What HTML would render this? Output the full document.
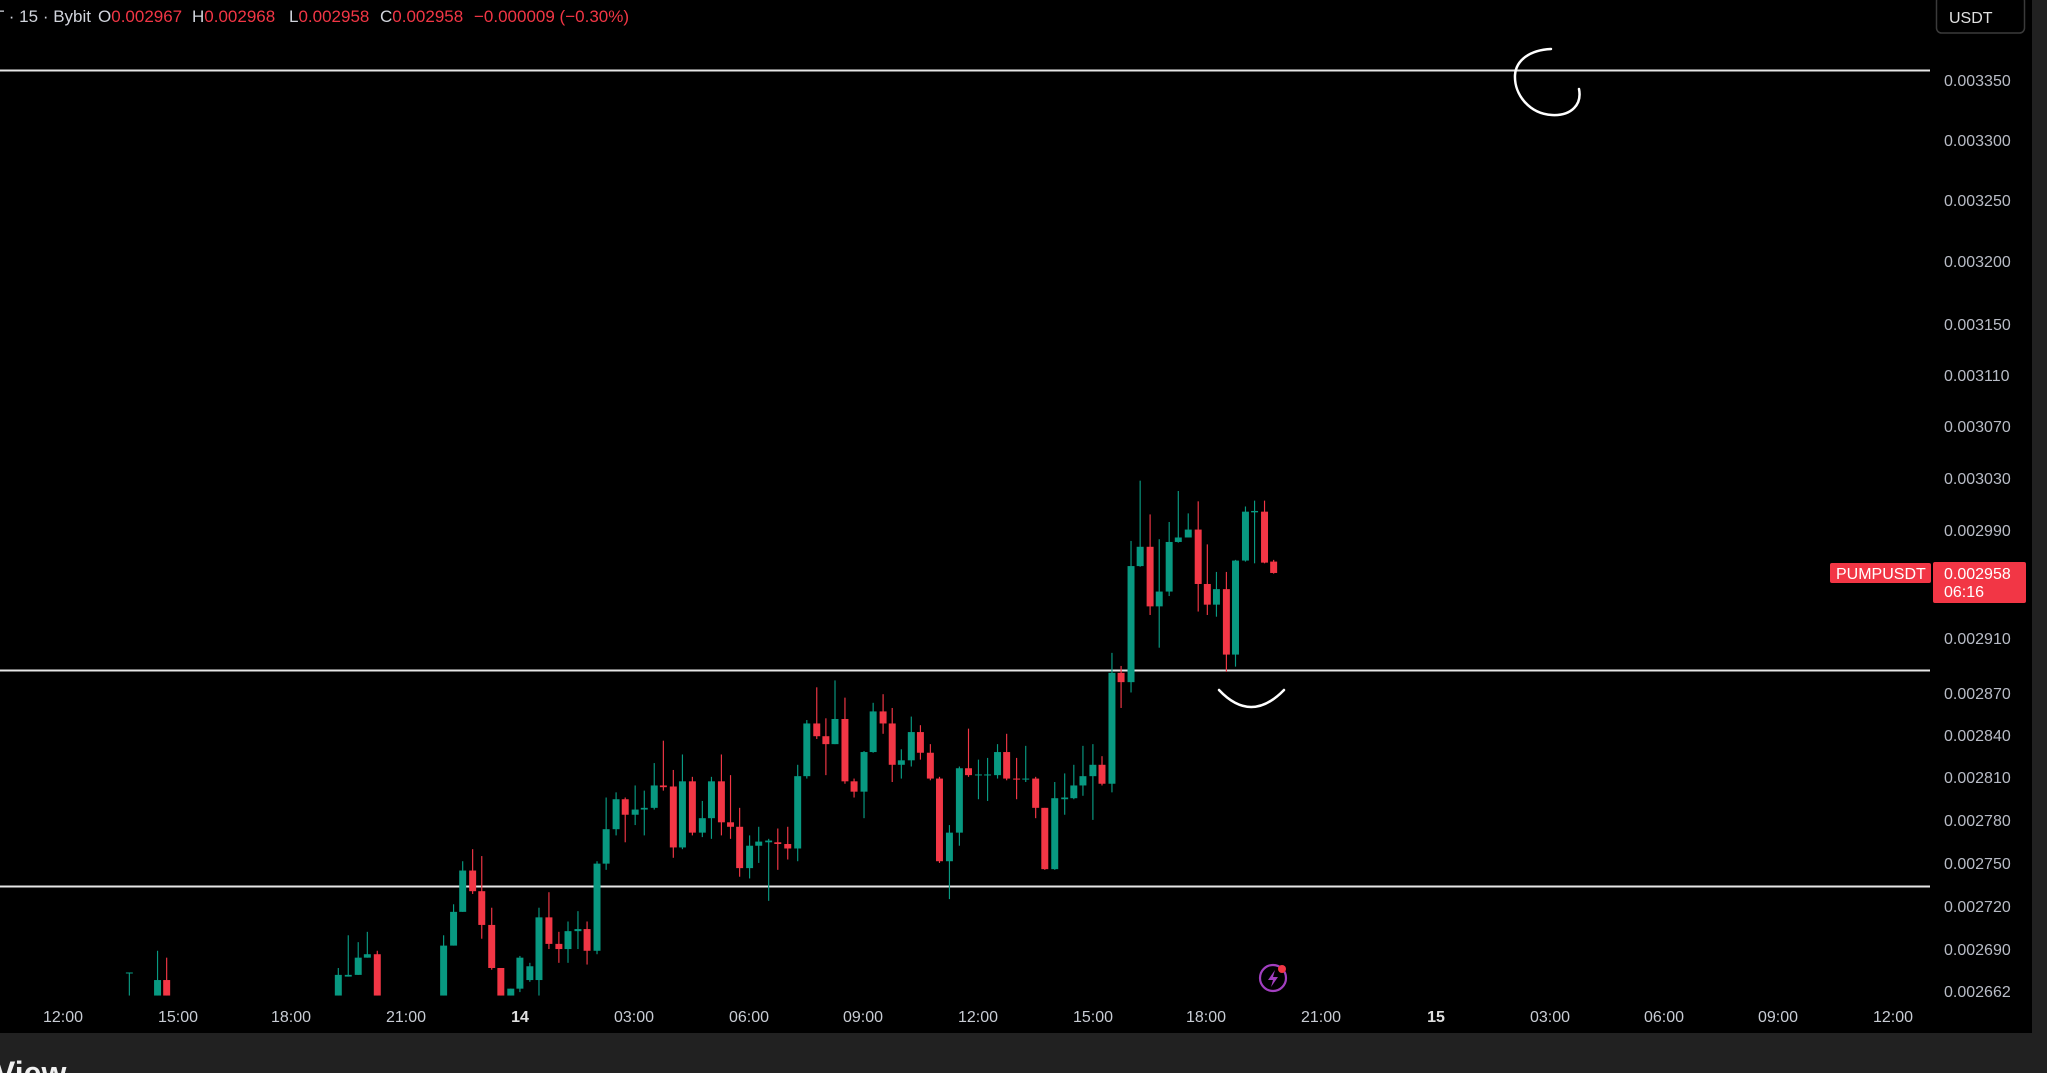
<!DOCTYPE html>
<html><head><meta charset="utf-8"><style>
html,body{margin:0;padding:0;background:#000;width:2047px;height:1073px;overflow:hidden;font-family:"Liberation Sans",sans-serif}
svg{position:absolute;left:0;top:0}
</style></head><body>
<svg width="2047" height="1073" viewBox="0 0 2047 1073" xmlns="http://www.w3.org/2000/svg">
<rect x="0" y="0" width="2047" height="1073" fill="#212121"/>
<rect x="0" y="0" width="2032" height="1033" fill="#000"/>
<!-- header -->
<g font-size="17" fill="#d1d4dc">
<text x="-6" y="22">T · 15 · Bybit</text>
<text x="98" y="22">O<tspan fill="#f23645">0.002967</tspan></text>
<text x="192" y="22">H<tspan fill="#f23645">0.002968</tspan></text>
<text x="289" y="22">L<tspan fill="#f23645">0.002958</tspan></text>
<text x="380" y="22">C<tspan fill="#f23645">0.002958</tspan></text>
<text x="474" y="22" fill="#f23645">−0.000009 (−0.30%)</text>
</g>
<!-- USDT box -->
<rect x="1936.5" y="-4" width="88" height="37" rx="5" fill="#000" stroke="#3a3a3a" stroke-width="1.5"/>
<text x="1949" y="23" font-size="16" fill="#e0e0e0">USDT</text>
<!-- horizontal lines -->
<rect x="0" y="69.5" width="1930" height="2" fill="#e6e6e6"/>
<rect x="0" y="669.5" width="1930" height="2" fill="#e6e6e6"/>
<rect x="0" y="885.5" width="1930" height="2" fill="#e6e6e6"/>
<!-- drawings -->
<path d="M1551,49 C1530,50 1516,60 1515,75 C1514,95 1530,114 1552,115 C1572,116 1582,104 1579,89" fill="none" stroke="#fff" stroke-width="2.5" stroke-linecap="round"/>
<path d="M1219,690 Q1251,724 1284,690" fill="none" stroke="#fff" stroke-width="2.5" stroke-linecap="round"/>
<!-- price axis -->
<g font-size="16" fill="#b8bcc6">
<text x="1944" y="86">0.003350</text>
<text x="1944" y="146">0.003300</text>
<text x="1944" y="206">0.003250</text>
<text x="1944" y="267">0.003200</text>
<text x="1944" y="330">0.003150</text>
<text x="1944" y="381">0.003110</text>
<text x="1944" y="432">0.003070</text>
<text x="1944" y="484">0.003030</text>
<text x="1944" y="536">0.002990</text>
<text x="1944" y="644">0.002910</text>
<text x="1944" y="699">0.002870</text>
<text x="1944" y="741">0.002840</text>
<text x="1944" y="783">0.002810</text>
<text x="1944" y="826">0.002780</text>
<text x="1944" y="869">0.002750</text>
<text x="1944" y="912">0.002720</text>
<text x="1944" y="955">0.002690</text>
<text x="1944" y="997">0.002662</text>
</g>
<!-- price tag -->
<rect x="1830" y="563" width="101" height="20" rx="2" fill="#f23645"/>
<text x="1836" y="579" font-size="16" fill="#fff">PUMPUSDT</text>
<rect x="1933" y="562" width="93" height="41" rx="2" fill="#f23645"/>
<text x="1944" y="579" font-size="16" fill="#fff">0.002958</text>
<text x="1944" y="597" font-size="16" fill="#fff">06:16</text>
<!-- candles -->
<g transform="translate(0,460) scale(0.8292,0.3444)">
<g id="c"></g>
</g>
<!-- time axis -->
<g font-size="16" fill="#c8ccd4" text-anchor="middle">
<text x="63" y="1022">12:00</text>
<text x="178" y="1022">15:00</text>
<text x="291" y="1022">18:00</text>
<text x="406" y="1022">21:00</text>
<text x="520" y="1022" font-weight="bold" fill="#e0e0e0">14</text>
<text x="634" y="1022">03:00</text>
<text x="749" y="1022">06:00</text>
<text x="863" y="1022">09:00</text>
<text x="978" y="1022">12:00</text>
<text x="1093" y="1022">15:00</text>
<text x="1206" y="1022">18:00</text>
<text x="1321" y="1022">21:00</text>
<text x="1436" y="1022" font-weight="bold" fill="#e0e0e0">15</text>
<text x="1550" y="1022">03:00</text>
<text x="1664" y="1022">06:00</text>
<text x="1778" y="1022">09:00</text>
<text x="1893" y="1022">12:00</text>
</g>
<!-- lightning icon -->
<circle cx="1273" cy="978" r="13" fill="none" stroke="#a23fc0" stroke-width="2.2"/>
<path d="M1275,970 L1268,980 L1273,980 L1271,987 L1278,977 L1273,977 Z" fill="#a23fc0"/>
<circle cx="1282" cy="969" r="4" fill="#f23645"/>
<!-- bottom logo -->
<text x="-6" y="1084" font-size="32" font-weight="bold" fill="#f0f0f0">View</text>
</svg>
<script>
var d=[
[156,1488,1490,1488,1555,'g'],[190,1510,1555,1425,1555,'g'],[201,1510,1555,1445,1555,'r'],
[408,1495,1555,1475,1555,'g'],[420,1495,1500,1380,1500,'g'],[432,1445,1495,1400,1495,'g'],[443,1435,1445,1370,1445,'g'],[455,1435,1555,1425,1555,'r'],
[535,1410,1555,1380,1555,'g'],[547,1312,1410,1290,1410,'g'],[558,1192,1312,1165,1312,'g'],[570,1192,1252,1130,1260,'r'],[581,1252,1350,1150,1390,'r'],[593,1350,1475,1300,1480,'r'],[604,1475,1555,1475,1555,'r'],[616,1535,1555,1535,1555,'g'],[627,1445,1535,1440,1545,'g'],[639,1470,1510,1460,1515,'g'],[650,1328,1510,1300,1555,'g'],[662,1328,1405,1255,1420,'r'],[674,1405,1420,1370,1460,'r'],[685,1368,1420,1340,1460,'g'],[697,1362,1368,1310,1420,'g'],[708,1362,1425,1340,1465,'r'],[720,1172,1425,1165,1435,'g'],[731,1072,1172,980,1190,'g'],[743,985,1072,965,1090,'g'],[754,985,1030,980,1110,'r'],[766,1015,1030,945,1060,'g'],[777,1010,1015,960,1090,'g'],[789,945,1010,880,1015,'g'],[800,945,950,815,960,'r'],[812,948,1125,900,1155,'r'],[823,933,1125,855,1130,'g'],[835,933,1082,920,1090,'r'],[847,1040,1082,990,1095,'g'],[858,933,1040,920,1100,'g'],[870,933,1052,855,1090,'r'],[881,1052,1065,915,1100,'r'],[892,1065,1185,1010,1210,'r'],[904,1120,1185,1090,1215,'g'],[915,1108,1120,1065,1170,'g'],[927,1105,1110,1100,1280,'g'],[938,1110,1115,1070,1190,'r'],[950,1115,1128,1065,1160,'r'],[962,918,1128,885,1165,'g'],[973,765,918,755,925,'g'],[985,765,802,660,810,'r'],[996,802,825,750,915,'r'],[1007,752,825,640,825,'g'],[1019,752,933,690,940,'r'],[1030,933,963,925,980,'r'],[1042,848,963,845,1040,'g'],[1053,730,848,705,850,'g'],[1065,730,765,680,795,'r'],[1076,765,885,720,935,'r'],[1087,872,885,840,925,'g'],[1099,790,872,745,890,'g'],[1110,790,850,770,870,'r'],[1122,850,925,825,930,'r'],[1133,925,1165,920,1170,'r'],[1145,1082,1165,1060,1275,'g'],[1157,895,1082,890,1120,'g'],[1168,895,915,780,920,'r'],[1180,913,916,870,985,'g'],[1191,913,916,865,990,'g'],[1203,848,915,825,925,'g'],[1214,848,925,795,930,'r'],[1226,925,928,865,985,'r'],[1237,925,928,830,935,'g'],[1249,925,1010,920,1040,'r'],[1260,1010,1188,1010,1190,'r'],[1272,982,1188,935,1190,'g'],[1284,980,985,910,1030,'g'],[1295,945,982,885,985,'g'],[1306,918,945,830,975,'g'],[1318,885,918,825,1045,'g'],[1329,885,940,860,945,'r'],[1341,618,940,560,965,'g'],[1352,618,645,598,720,'r'],[1364,308,645,235,675,'g'],[1375,252,308,60,310,'g'],[1387,252,425,158,450,'r'],[1398,382,425,230,545,'g'],[1410,238,382,180,395,'g'],[1421,225,238,90,240,'g'],[1433,202,225,155,225,'g'],[1445,202,360,120,440,'r'],[1456,360,420,245,450,'r'],[1467,375,420,325,455,'g'],[1479,375,565,325,615,'r'],[1490,292,565,290,600,'g'],[1502,150,292,135,295,'g'],[1513,148,152,118,300,'g'],[1525,150,298,118,300,'r'],[1536,295,328,290,330,'r']];
var g=document.getElementById('c'),s='';
d.forEach(function(c){var col=c[5]=='g'?'#089981':'#f23645';
s+='<rect x="'+(c[0]-0.7)+'" y="'+c[3]+'" width="1.4" height="'+(c[4]-c[3])+'" fill="'+col+'"/>';
s+='<rect x="'+(c[0]-4.2)+'" y="'+c[1]+'" width="8.4" height="'+Math.max(c[2]-c[1],3)+'" fill="'+col+'"/>';});
g.innerHTML=s;
</script>
</body></html>
